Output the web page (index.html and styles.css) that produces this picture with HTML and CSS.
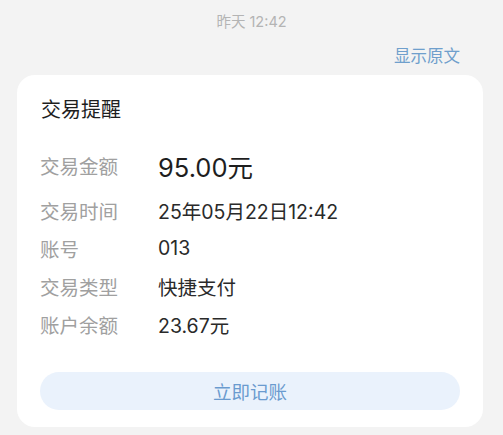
FILE: index.html
```html
<!DOCTYPE html>
<html lang="zh-CN">
<head>
<meta charset="utf-8">
<link rel="stylesheet" href="styles.css">
</head>
<body>
<div class="page">
  <div class="time">昨天 12:42</div>
  <div class="orig"><span class="orig-link">显示原文</span></div>
  <div class="card">
    <div class="title">交易提醒</div>
    <div class="rows">
      <div class="row row-first"><span class="label">交易金额</span><span class="value amount">95.00元</span></div>
      <div class="row"><span class="label">交易时间</span><span class="value">25年05月22日12:42</span></div>
      <div class="row"><span class="label">账号</span><span class="value">013</span></div>
      <div class="row"><span class="label">交易类型</span><span class="value">快捷支付</span></div>
      <div class="row"><span class="label">账户余额</span><span class="value">23.67元</span></div>
    </div>
    <div class="btn">立即记账</div>
  </div>
</div>
</body>
</html>
```
FILE: styles.css
```css
html, body {
  margin: 0;
  padding: 0;
  background: #f3f3f3;
}
body {
  font-family: "Noto Sans CJK SC", "Noto Sans", sans-serif;
  width: 503px;
  height: 435px;
  overflow: hidden;
}
.page {
  padding-top: 12px;
}
.time {
  text-align: center;
  font-family: Inter, "Noto Sans CJK SC", sans-serif;
  font-size: 14.5px;
  line-height: 20px;
  color: #b4b4b4;
}
.orig {
  margin-top: 12px;
  display: flex;
  justify-content: flex-end;
  padding-right: 43px;
}
.orig-link {
  font-size: 16.5px;
  line-height: 22px;
  color: #6f9fcc;
}
.card {
  margin: 9px 20px 0 17px;
  background: #ffffff;
  border-radius: 18px;
  padding: 20px 23px 17px 23px;
}
.title {
  font-size: 20px;
  line-height: 28px;
  color: #1e1e1e;
  padding-left: 1px;
}
.rows {
  margin-top: 23px;
  display: flex;
  flex-direction: column;
}
.row {
  display: flex;
  align-items: center;
  height: 38px;
}
.row-first {
  margin-bottom: 7px;
}
.label {
  width: 118px;
  flex: none;
  font-size: 19.5px;
  color: #a0a0a0;
}
.value {
  font-family: Inter, "Noto Sans CJK SC", sans-serif;
  font-size: 19.5px;
  color: #2a2a2a;
}
.amount {
  font-size: 25.5px;
  color: #1e1e1e;
}
.btn {
  margin-top: 29px;
  height: 38px;
  border-radius: 19px;
  background: #eaf2fc;
  display: flex;
  align-items: center;
  justify-content: center;
  font-size: 18.5px;
  color: #6a9bcf;
}
```
